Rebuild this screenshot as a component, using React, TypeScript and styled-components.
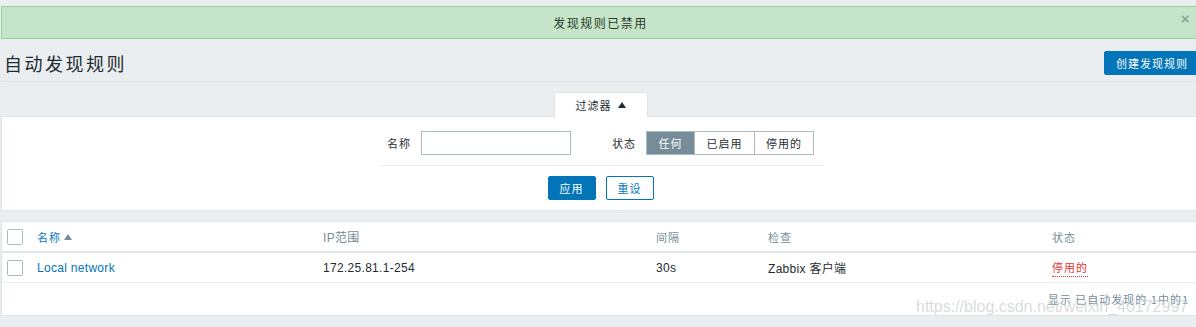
import styled, { createGlobalStyle } from "styled-components";

const GlobalStyle = createGlobalStyle`
    body {
        margin: 0;
        background: #ebeef0;
        overflow: hidden;
        font-family: "Liberation Sans", "Noto Sans CJK SC", sans-serif;
        color: #1f2c33;
    }
`;

const cjk = `"Noto Sans CJK SC", "Liberation Sans", sans-serif`;

const Page = styled.div`
    position: relative;
    width: 1199px;
    margin-left: 1px;
    padding-top: 6px;
`;

const Message = styled.div`
    position: relative;
    height: 31px;
    border: 1px solid #98d29b;
    background: #c6e4c7;
    display: flex;
    align-items: center;
    justify-content: center;
    font-family: ${cjk};
    font-size: 12px;
    letter-spacing: 1.5px;
    color: #2a3a2c;
`;

const Close = styled.span`
    position: absolute;
    right: 8px;
    top: 3px;
    font-family: "Liberation Sans", sans-serif;
    font-size: 15px;
    font-weight: bold;
    color: #90a59a;
`;

const Header = styled.div`
    display: flex;
    align-items: center;
    justify-content: space-between;
    height: 24px;
    padding: 12px 0 6px 3px;
    border-bottom: 1px solid #dde2e5;
`;

const Title = styled.h1`
    margin: 0;
    font-family: ${cjk};
    font-weight: normal;
    font-size: 18px;
    line-height: 24px;
    letter-spacing: 2.5px;
    color: #1f2c33;
`;

const Button = styled.button<{ $outline?: boolean }>`
    height: 24px;
    padding: 0 12px;
    border-radius: 2px;
    border: 1px solid #0275b8;
    background: ${(p) => (p.$outline ? "#fff" : "#0275b8")};
    color: ${(p) => (p.$outline ? "#0275b8" : "#fff")};
    font-family: ${cjk};
    font-size: 11px;
    letter-spacing: 1px;
    white-space: nowrap;
    cursor: pointer;
`;

const CreateButton = styled(Button)`
    width: 96px;
    padding: 0;
`;

const FilterWrap = styled.div`
    margin-top: 10px;
    display: flex;
    flex-direction: column;
    align-items: center;
`;

const Tab = styled.div`
    position: relative;
    z-index: 1;
    width: 92px;
    height: 24px;
    background: #fff;
    border: 1px solid #dfe4e7;
    border-bottom: none;
    border-radius: 2px 2px 0 0;
    display: flex;
    align-items: center;
    justify-content: center;
    gap: 6px;
    font-family: ${cjk};
    font-size: 11px;
    letter-spacing: 1px;
`;

const Arrow = styled.span`
    width: 0;
    height: 0;
    border-left: 4px solid transparent;
    border-right: 4px solid transparent;
    border-bottom: 6px solid #1f2c33;
`;

const FilterPanel = styled.div`
    align-self: stretch;
    margin-top: -1px;
    background: #fff;
    border: 1px solid #dfe4e7;
    padding: 14px 0 10px;
    display: flex;
    flex-direction: column;
    align-items: center;
`;

const FormRow = styled.div`
    display: flex;
    align-items: center;
    width: 444px;
    height: 24px;
    padding-bottom: 10px;
    border-bottom: 1px solid #ebeef0;
    justify-content: center;
`;

const Label = styled.label`
    font-family: ${cjk};
    font-size: 11px;
    letter-spacing: 1px;
    margin-right: 10px;
`;

const Input = styled.input`
    width: 150px;
    height: 24px;
    box-sizing: border-box;
    border: 1px solid #acbbc2;
    border-radius: 0;
    margin: 0 41px 0 0;
    padding: 0 4px;
`;

const Segments = styled.div`
    display: flex;
    height: 24px;
    border: 1px solid #acbbc2;
    box-sizing: border-box;
`;

const Segment = styled.span<{ $active?: boolean; $w: number }>`
    width: ${(p) => p.$w}px;
    display: flex;
    align-items: center;
    justify-content: center;
    font-family: ${cjk};
    font-size: 11px;
    letter-spacing: 1px;
    background: ${(p) => (p.$active ? "#768d99" : "#fff")};
    color: ${(p) => (p.$active ? "#fff" : "#1f2c33")};
    & + & {
        border-left: 1px solid #acbbc2;
    }
`;

const Actions = styled.div`
    display: flex;
    gap: 10px;
    margin-top: 10px;
`;

const SmallButton = styled(Button)`
    width: 48px;
    padding: 0;
`;

const Table = styled.div`
    margin-top: 10px;
    background: #fff;
    border: 1px solid #dfe4e7;
`;

const Row = styled.div<{ $head?: boolean }>`
    display: grid;
    grid-template-columns: 35px 286px 333px 112px 284px 1fr;
    align-items: center;
    height: 29px;
    border-bottom: ${(p) => (p.$head ? "2px solid #dfe4e7" : "1px solid #ebeef0")};
    font-size: 12px;
`;

const Cell = styled.span<{ $cjk?: boolean }>`
    font-family: ${(p) => (p.$cjk ? cjk : `"Liberation Sans", "Noto Sans CJK SC", sans-serif`)};
    ${(p) => (p.$cjk ? "font-size: 11px; letter-spacing: 1px;" : "letter-spacing: 0.3px;")}
`;

const HeadCell = styled(Cell)`
    color: #768d99;
`;

const SortLink = styled.span`
    color: #0275b8;
    font-family: ${cjk};
    font-size: 11px;
    letter-spacing: 1px;
    display: flex;
    align-items: center;
    gap: 3px;
`;

const SortArrow = styled.span`
    border-left: 4px solid transparent;
    border-right: 4px solid transparent;
    border-bottom: 6px solid #768d99;
`;

const Check = styled.span`
    margin-left: 5px;
    width: 16px;
    height: 16px;
    box-sizing: border-box;
    border: 1px solid #acbbc2;
    border-radius: 2px;
`;

const Link = styled.span`
    color: #0275b8;
    letter-spacing: 0.3px;
`;

const Disabled = styled.span`
    color: #e33734;
    font-family: ${cjk};
    font-size: 11px;
    letter-spacing: 1px;
    border-bottom: 1px dotted #e33734;
    padding-bottom: 1px;
    justify-self: start;
`;

const Footer = styled.div`
    height: 32px;
    display: flex;
    align-items: center;
    justify-content: flex-end;
    padding-right: 10px;
    font-family: ${cjk};
    font-size: 11px;
    letter-spacing: 1px;
    color: #768d99;
`;

const Watermark = styled.div`
    position: absolute;
    left: 915px;
    top: 298px;
    font-family: "Liberation Sans", sans-serif;
    font-size: 16px;
    color: rgba(200, 205, 208, 0.7);
    pointer-events: none;
`;

export default function App() {
    return (
        <>
            <GlobalStyle />
            <Page>
                <Message>
                    发现规则已禁用
                    <Close>×</Close>
                </Message>
                <Header>
                    <Title>自动发现规则</Title>
                    <CreateButton>创建发现规则</CreateButton>
                </Header>
                <FilterWrap>
                    <Tab>
                        过滤器 <Arrow />
                    </Tab>
                    <FilterPanel>
                        <FormRow>
                            <Label>名称</Label>
                            <Input />
                            <Label>状态</Label>
                            <Segments>
                                <Segment $active $w={47}>任何</Segment>
                                <Segment $w={59}>已启用</Segment>
                                <Segment $w={58}>停用的</Segment>
                            </Segments>
                        </FormRow>
                        <Actions>
                            <SmallButton>应用</SmallButton>
                            <SmallButton $outline>重设</SmallButton>
                        </Actions>
                    </FilterPanel>
                </FilterWrap>
                <Table>
                    <Row $head>
                        <Check />
                        <SortLink>
                            名称 <SortArrow />
                        </SortLink>
                        <HeadCell>IP范围</HeadCell>
                        <HeadCell $cjk>间隔</HeadCell>
                        <HeadCell $cjk>检查</HeadCell>
                        <HeadCell $cjk>状态</HeadCell>
                    </Row>
                    <Row>
                        <Check />
                        <Link>Local network</Link>
                        <Cell>172.25.81.1-254</Cell>
                        <Cell>30s</Cell>
                        <Cell>Zabbix 客户端</Cell>
                        <Disabled>停用的</Disabled>
                    </Row>
                    <Footer>显示 已自动发现的 1中的1</Footer>
                </Table>
                <Watermark>https://blog.csdn.net/weixin_40172997</Watermark>
            </Page>
        </>
    );
}
